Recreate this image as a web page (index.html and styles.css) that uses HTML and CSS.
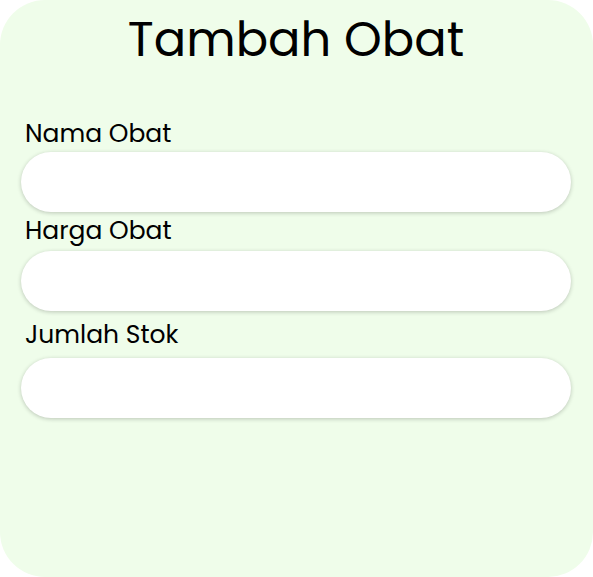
FILE: index.html
```html
<!DOCTYPE html>
<html lang="id">
<head>
<meta charset="utf-8">
<title>Tambah Obat</title>
<link rel="stylesheet" href="styles.css">
</head>
<body>
<div class="card">
  <h1 class="title">Tambah Obat</h1>
  <form class="form">
    <label class="label label-1" for="nama">Nama Obat</label>
    <input class="field field-1" id="nama" type="text">
    <label class="label label-2" for="harga">Harga Obat</label>
    <input class="field field-2" id="harga" type="text">
    <label class="label label-3" for="stok">Jumlah Stok</label>
    <input class="field field-3" id="stok" type="text">
  </form>
</div>
</body>
</html>
```
FILE: styles.css
```css
html, body {
  margin: 0;
  padding: 0;
  background: #ffffff;
}
body {
  font-family: "Poppins", "Open Sans", "DejaVu Sans", sans-serif;
  color: #000;
}
.card {
  width: 593px;
  height: 577px;
  box-sizing: border-box;
  background: #effdea;
  border-radius: 45px;
  padding: 0 22px 0 21px;
  display: flex;
  flex-direction: column;
}
.title {
  margin: 10px 0 0;
  font-size: 48px;
  font-weight: 400;
  line-height: 60px;
  text-align: center;
}
.form {
  display: flex;
  flex-direction: column;
  margin-top: 49px;
}
.label {
  font-size: 25px;
  line-height: 30px;
  padding-left: 4px;
}
.label-1 { margin-top: 0; }
.label-2 { margin-top: 4px; }
.label-3 { margin-top: 9px; }
.field {
  display: block;
  height: 60px;
  width: 550px;
  box-sizing: border-box;
  border: none;
  border-radius: 30px;
  background: #fff;
  box-shadow: 0 1px 4px rgba(0, 0, 0, 0.22);
  outline: none;
}
.field-1 { margin-top: 3px; }
.field-2 { margin-top: 5px; }
.field-3 { margin-top: 8px; }
```
